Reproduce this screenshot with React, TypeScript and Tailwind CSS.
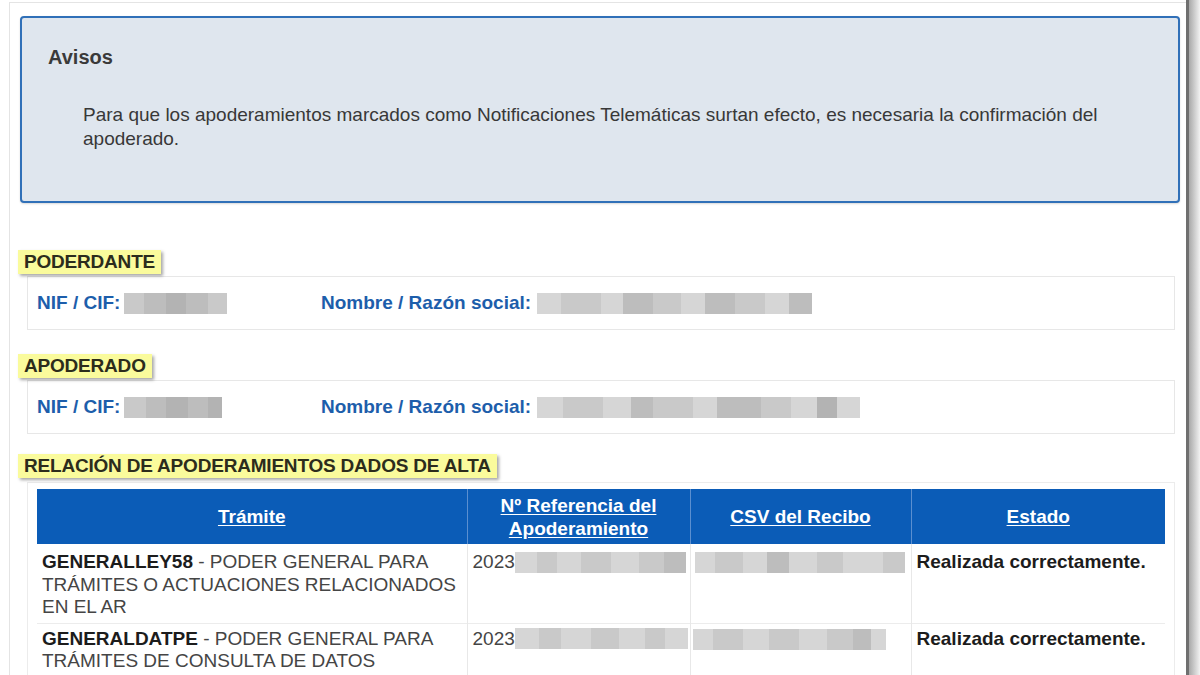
import React from "react";

const Blur = ({ segs, h = 21 }: { segs: [number, string][]; h?: number }) => (
  <span className="inline-flex align-middle" style={{ height: h }}>
    {segs.map(([w, c], i) => (
      <span key={i} style={{ width: w, background: c, height: h }} />
    ))}
  </span>
);

const Label = ({ children }: { children: React.ReactNode }) => (
  <div className="flex">
    <div className="bg-[#fafb9c] text-[#2c2c1c] font-bold text-[19px] leading-[24px] h-[24px] px-[6px] shadow-[2px_2px_3px_rgba(0,0,0,0.35)] tracking-[-0.2px]">
      {children}
    </div>
  </div>
);

const Info = ({ nif, name }: { nif: [number, string][]; name: [number, string][] }) => (
  <div className="ml-[7px] mr-[5px] h-[54px] border border-[#e7e7e7] flex items-center pl-[9px] text-[19px] font-bold text-[#1d5eab]">
    <div className="w-[284px] flex items-center">
      <span>NIF / CIF:</span>
      <span className="ml-[4px]"><Blur segs={nif} /></span>
    </div>
    <div className="flex items-center">
      <span>Nombre / Razón social:</span>
      <span className="ml-[6px]"><Blur segs={name} /></span>
    </div>
  </div>
);

export default function App() {
  const g1 = "#c9c9c9";
  const g2 = "#bdbdbd";
  const g3 = "#d6d6d6";
  const g4 = "#b3b3b3";
  return (
    <div className="w-[1200px] h-[675px] overflow-hidden bg-white flex font-['Liberation_Sans',Arial,sans-serif]">
      <div className="w-[9px] shrink-0" />
      <div className="flex-1 mt-[2px] border-l border-t border-[#e4e4e4] pl-[10px] pr-[6px] pt-[13px]">
        {/* Avisos */}
        <div className="h-[187px] border-2 border-[#3070b8] rounded-[4px] bg-[#dfe6ee] pl-[26px] pt-[26px] shadow-[0_1px_2px_rgba(0,0,0,0.15)]">
          <div className="text-[20px] font-bold text-[#3a3a3a] leading-[26px]">Avisos</div>
          <div className="mt-[33px] ml-[35px] mr-[40px] text-[19px] leading-[24px] text-[#383838]">
            Para que los apoderamientos marcados como Notificaciones Telemáticas surtan efecto, es necesaria la confirmación del apoderado.
          </div>
        </div>

        <div className="mt-[47px] -ml-[2px]">
          <Label>PODERDANTE</Label>
        </div>
        <div className="mt-[2px]">
          <Info
            nif={[[20, g1], [22, g2], [20, g4], [22, g2], [19, g1]]}
            name={[[24, g3], [40, g1], [22, g3], [30, g2], [28, g1], [24, g3], [30, g2], [30, g1], [24, g3], [23, g2]]}
          />
        </div>

        <div className="mt-[24px] -ml-[2px]">
          <Label>APODERADO</Label>
        </div>
        <div className="mt-[2px]">
          <Info
            nif={[[22, g1], [20, g2], [22, g4], [20, g2], [14, g4]]}
            name={[[26, g3], [40, g1], [28, g3], [22, g2], [40, g1], [24, g3], [44, g2], [30, g1], [26, g3], [20, g4], [23, g3]]}
          />
        </div>

        <div className="mt-[20px] -ml-[2px]">
          <Label>RELACIÓN DE APODERAMIENTOS DADOS DE ALTA</Label>
        </div>
        <div className="mt-[4px] ml-[7px] mr-[5px] border border-[#ececec] px-[9px] pt-[6px] pb-[20px]">
          <table className="w-full border-collapse text-[19px] leading-[22.5px] table-fixed">
            <colgroup>
              <col className="w-[430px]" />
              <col className="w-[223px]" />
              <col className="w-[221px]" />
              <col />
            </colgroup>
            <thead>
              <tr className="bg-[#0b5cb7] h-[55px]">
                {["Trámite", "Nº Referencia del Apoderamiento", "CSV del Recibo", "Estado"].map((t, i) => (
                  <th
                    key={i}
                    className={`text-white font-bold underline underline-offset-[2px] text-center align-middle px-[20px] leading-[23px] ${i > 0 ? "border-l border-[#5b8fd0]" : ""}`}
                  >
                    {t}
                  </th>
                ))}
              </tr>
            </thead>
            <tbody>
              <tr className="h-[79px] border-b border-[#ececec]">
                <td className="align-top pl-[5px] pr-[4px] pt-[7px] text-[#454545]">
                  <span className="font-bold text-[#1c1c1c]">GENERALLEY58</span> - PODER GENERAL PARA TRÁMITES O ACTUACIONES RELACIONADOS EN EL AR
                </td>
                <td className="align-top pl-[5px] pt-[7px] text-[#454545] border-l border-[#e8e8e8] whitespace-nowrap">
                  <span className="inline-flex items-center">
                    2023
                    <Blur segs={[[22, g3], [20, g1], [24, g3], [30, g1], [28, g3], [25, g1], [22, g2]]} />
                  </span>
                </td>
                <td className="align-top pl-[4px] pt-[7px] border-l border-[#e8e8e8]">
                  <Blur segs={[[20, g3], [28, g1], [24, g3], [22, g2], [28, g3], [26, g1], [40, g3], [22, g1]]} />
                </td>
                <td className="align-top pl-[5px] pt-[7px] font-bold text-[#1c1c1c] border-l border-[#e8e8e8] whitespace-nowrap">
                  Realizada correctamente.
                </td>
              </tr>
              <tr className="h-[80px]">
                <td className="align-top pl-[5px] pr-[4px] pt-[4px] text-[#454545]">
                  <span className="font-bold text-[#1c1c1c]">GENERALDATPE</span> - PODER GENERAL PARA TRÁMITES DE CONSULTA DE DATOS
                </td>
                <td className="align-top pl-[5px] pt-[4px] text-[#454545] border-l border-[#e8e8e8] whitespace-nowrap">
                  <span className="inline-flex items-center">
                    2023
                    <Blur segs={[[24, g3], [22, g1], [30, g3], [28, g1], [26, g3], [20, g1], [23, g3]]} />
                  </span>
                </td>
                <td className="align-top pl-[2px] pt-[4px] border-l border-[#e8e8e8]">
                  <Blur segs={[[20, g3], [30, g1], [26, g3], [30, g1], [28, g3], [26, g1], [18, g2], [15, g3]]} />
                </td>
                <td className="align-top pl-[5px] pt-[4px] font-bold text-[#1c1c1c] border-l border-[#e8e8e8] whitespace-nowrap">
                  Realizada correctamente.
                </td>
              </tr>
            </tbody>
          </table>
        </div>
      </div>
      <div className="w-[3px] shrink-0 bg-[#6f6f6f]" />
      <div className="w-[11px] shrink-0 bg-gradient-to-r from-[#a9a9a9] to-[#f2f2f2]" />
    </div>
  );
}
